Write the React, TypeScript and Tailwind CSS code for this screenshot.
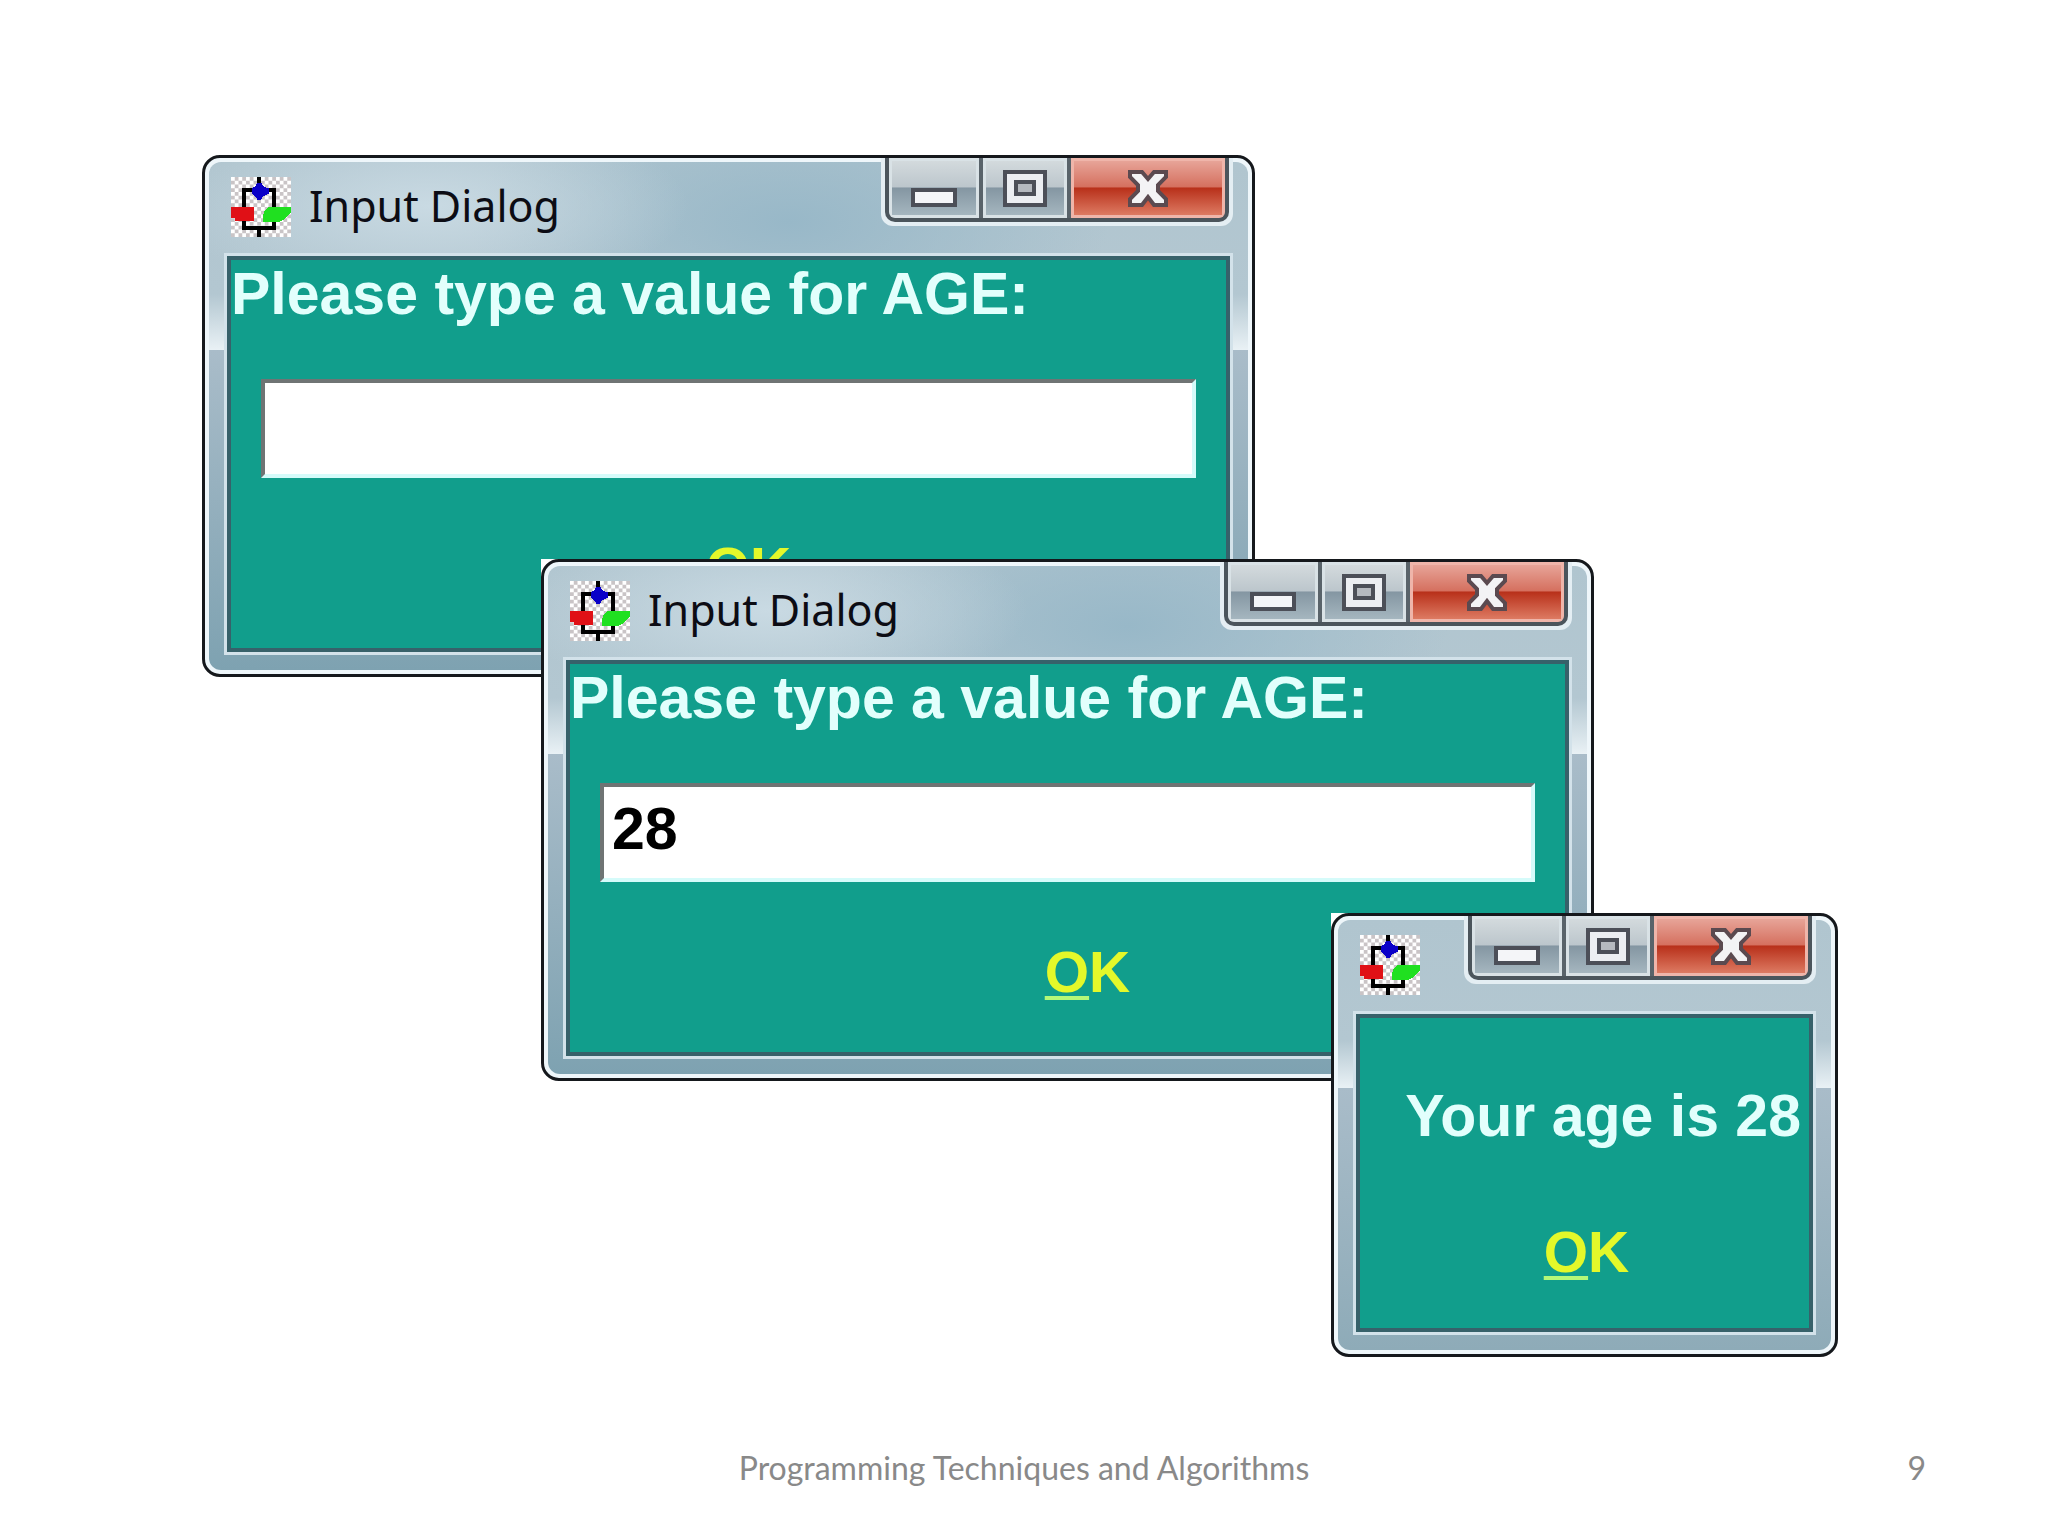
import React, { useId } from 'react';
import clsx from 'clsx';

const FlowchartIcon: React.FC = () => (
  <svg viewBox="0 0 16 16" className="w-15 h-15 flex-shrink-0" shapeRendering="crispEdges" aria-hidden="true">
    <defs>
      <pattern id="checker" width="2" height="2" patternUnits="userSpaceOnUse">
        <rect width="2" height="2" fill="#ffffff" />
        <rect x="1" width="1" height="1" fill="#c9c4c6" />
        <rect y="1" width="1" height="1" fill="#c9c4c6" />
      </pattern>
    </defs>
    <rect width="16" height="16" fill="url(#checker)" />
    <path d="M7 0h1v3h4v11H8v2H7v-2H3V3h4zM4 4v9h7V4z" fill="#000000" fillRule="evenodd" />
    <path d="M7 1.5h1l.6 1L10 3v1.5l-1.4.6L8 6H7l-.6-.9L5.5 4.5V3l.9-.5z" fill="#0a00c8" />
    <path d="M0 8h6.2v3.7H1V11H0z" fill="#e01016" />
    <path d="M10 8h6v1.5l-1.5 1.6-1.5.8H8.5v-1.6L9 9z" fill="#20e020" />
  </svg>
);

const MinimizeIcon: React.FC = () => (
  <svg viewBox="0 0 46 40" className="w-[46px] h-10" aria-hidden="true">
    <rect x="2" y="22" width="42" height="15" fill="#f4f5f8" stroke="#4c4f58" strokeWidth="4" />
  </svg>
);

const MaximizeIcon: React.FC = () => (
  <svg viewBox="0 0 46 40" className="w-[46px] h-10" aria-hidden="true">
    <rect x="3" y="4" width="40" height="33" fill="#eceef2" stroke="#4c4f58" strokeWidth="4" />
    <rect x="14" y="14" width="18" height="12" fill="#b5b9bf" stroke="#4c4f58" strokeWidth="4" />
  </svg>
);

const CloseIcon: React.FC = () => (
  <svg viewBox="0 0 44 40" className="w-11 h-10" aria-hidden="true">
    <path
      d="M4 4h12l6 7 6-7h12v5l-8 8v6l8 8v6H28l-6-8-6 8H4v-6l8-8v-6L4 9z"
      fill="#f3f3f5"
      stroke="#5b4a50"
      strokeWidth="4"
    />
  </svg>
);

const WindowControls: React.FC = () => (
  <div className="mr-[19px] flex-shrink-0 rounded-b-[12px] bg-[#e4eef3] px-1 pb-1">
    <div className="flex h-16 gap-1 rounded-b-[10px] border-x-4 border-b-4 border-[#4b555c] bg-[#59636a] overflow-hidden">
      <button
        type="button"
        aria-label="Minimize"
        className="flex w-[90px] items-center justify-center border-3 border-[#d9e2e6] bg-linear-[180deg,#d3dadd_0%,#bcc6cc_48%,#8496a2_50%,#a5b6bf_100%]"
      >
        <MinimizeIcon />
      </button>
      <button
        type="button"
        aria-label="Maximize"
        className="flex w-[84px] items-center justify-center border-3 border-[#d9e2e6] bg-linear-[180deg,#d3dadd_0%,#bcc6cc_48%,#8496a2_50%,#a5b6bf_100%]"
      >
        <MaximizeIcon />
      </button>
      <button
        type="button"
        aria-label="Close"
        className="flex w-[154px] items-center justify-center border-3 border-[#efb5aa] bg-linear-[180deg,#e7a498_0%,#d5705f_48%,#b8301a_50%,#dd7a62_100%]"
      >
        <CloseIcon />
      </button>
    </div>
  </div>
);

interface DialogWindowProps {
  title?: string;
  className: string;
  glass: string;
  children: React.ReactNode;
}

const DialogWindow: React.FC<DialogWindowProps> = ({ title, className, glass, children }) => (
  <section aria-label={title ?? 'Message'} className={clsx('absolute bg-white', className)}>
    <div className="rounded-[18px] border-3 border-[#15181c] bg-[#eef6fa] p-1">
      <div className={clsx('flow-root rounded-[12px] px-[15px] pb-[15px]', glass)}>
        <header className="-mx-[19px] -mt-1 flex h-[95px] items-start justify-between">
          <div className="flex items-center gap-[18px] pt-[19px] pl-[26px]">
            <FlowchartIcon />
            {title && (
              <h2 className="pb-[2px] font-['Noto_Sans',sans-serif] text-[43px] leading-[58px] text-[#0c0c14]">
                {title}
              </h2>
            )}
          </div>
          <WindowControls />
        </header>
        <div className="border-3 border-[#d3e2ea]">
          <div className="border-4 border-[#37616a] bg-[#119e8c] font-['Liberation_Sans',Arial,sans-serif] font-bold">
            {children}
          </div>
        </div>
      </div>
    </div>
  </section>
);

const OkButton: React.FC = () => (
  <button type="button" className="block text-[57px] leading-[64px] text-[#e4f82a]">
    <span className="underline decoration-4 underline-offset-4 decoration-[#b4f878]">O</span>K
  </button>
);

const InputDialog: React.FC<{ className: string; value?: string }> = ({ className, value = '' }) => {
  const id = useId();

  return (
    <DialogWindow
      title="Input Dialog"
      className={className}
      glass="bg-[radial-gradient(ellipse_260px_90px_at_220px_44px,#c9dae3,transparent),radial-gradient(ellipse_320px_140px_at_580px_60px,#98b8c8,transparent),linear-gradient(180deg,#b0c5cf_0%,#b3c7d1_26%,#e9f1f5_37%,#a9bcc9_37%,#7ea2b1_100%)]"
    >
      <form className="flex h-[388px] flex-col" onSubmit={(e) => e.preventDefault()}>
        <label htmlFor={id} className="block text-[59px] leading-[68px] whitespace-nowrap text-[#e2fffc]">
          Please type a value for AGE:
        </label>
        <input
          id={id}
          type="text"
          defaultValue={value}
          className="mt-[51px] mr-[30px] ml-[30px] h-[99px] border-4 border-t-[#6f7474] border-l-[#6f7474] border-r-[#d5fbfa] border-b-[#d5fbfa] bg-white pr-1 pb-2 pl-2 text-[59px] text-black outline-none"
        />
        <div className="mt-[58px] flex justify-center pl-10">
          <OkButton />
        </div>
      </form>
    </DialogWindow>
  );
};

const MessageDialog: React.FC<{ className: string }> = ({ className }) => (
  <DialogWindow
    className={className}
    glass="bg-linear-[180deg,#b0c5cf_0%,#b3c7d1_28%,#e9f1f5_39%,#a9bcc9_39%,#8eabb8_100%]"
  >
    <div className="flex h-[310px] flex-col">
      <p className="mt-16 pr-2 text-right text-[59px] leading-[68px] whitespace-nowrap text-[#e2fffc]">
        Your age is 28
      </p>
      <div className="mt-[70px] flex justify-center pl-1">
        <OkButton />
      </div>
    </div>
  </DialogWindow>
);

const App: React.FC = () => {
  return (
    <div className="flex min-h-screen flex-col bg-white">
      <main className="relative flex-1">
        <InputDialog className="top-[155px] left-[202px] w-[1053px]" />
        <InputDialog className="top-[559px] left-[541px] w-[1053px]" value="28" />
        <MessageDialog className="top-[913px] left-[1331px] w-[507px]" />
      </main>
      <footer className="grid grid-cols-3 items-center px-[122px] pb-12 font-['Lato',sans-serif] text-[32px] leading-[40px] text-[#898989]">
        <p className="col-start-2 text-center whitespace-nowrap">Programming Techniques and Algorithms</p>
        <p className="text-right">9</p>
      </footer>
    </div>
  );
};

export default App;
